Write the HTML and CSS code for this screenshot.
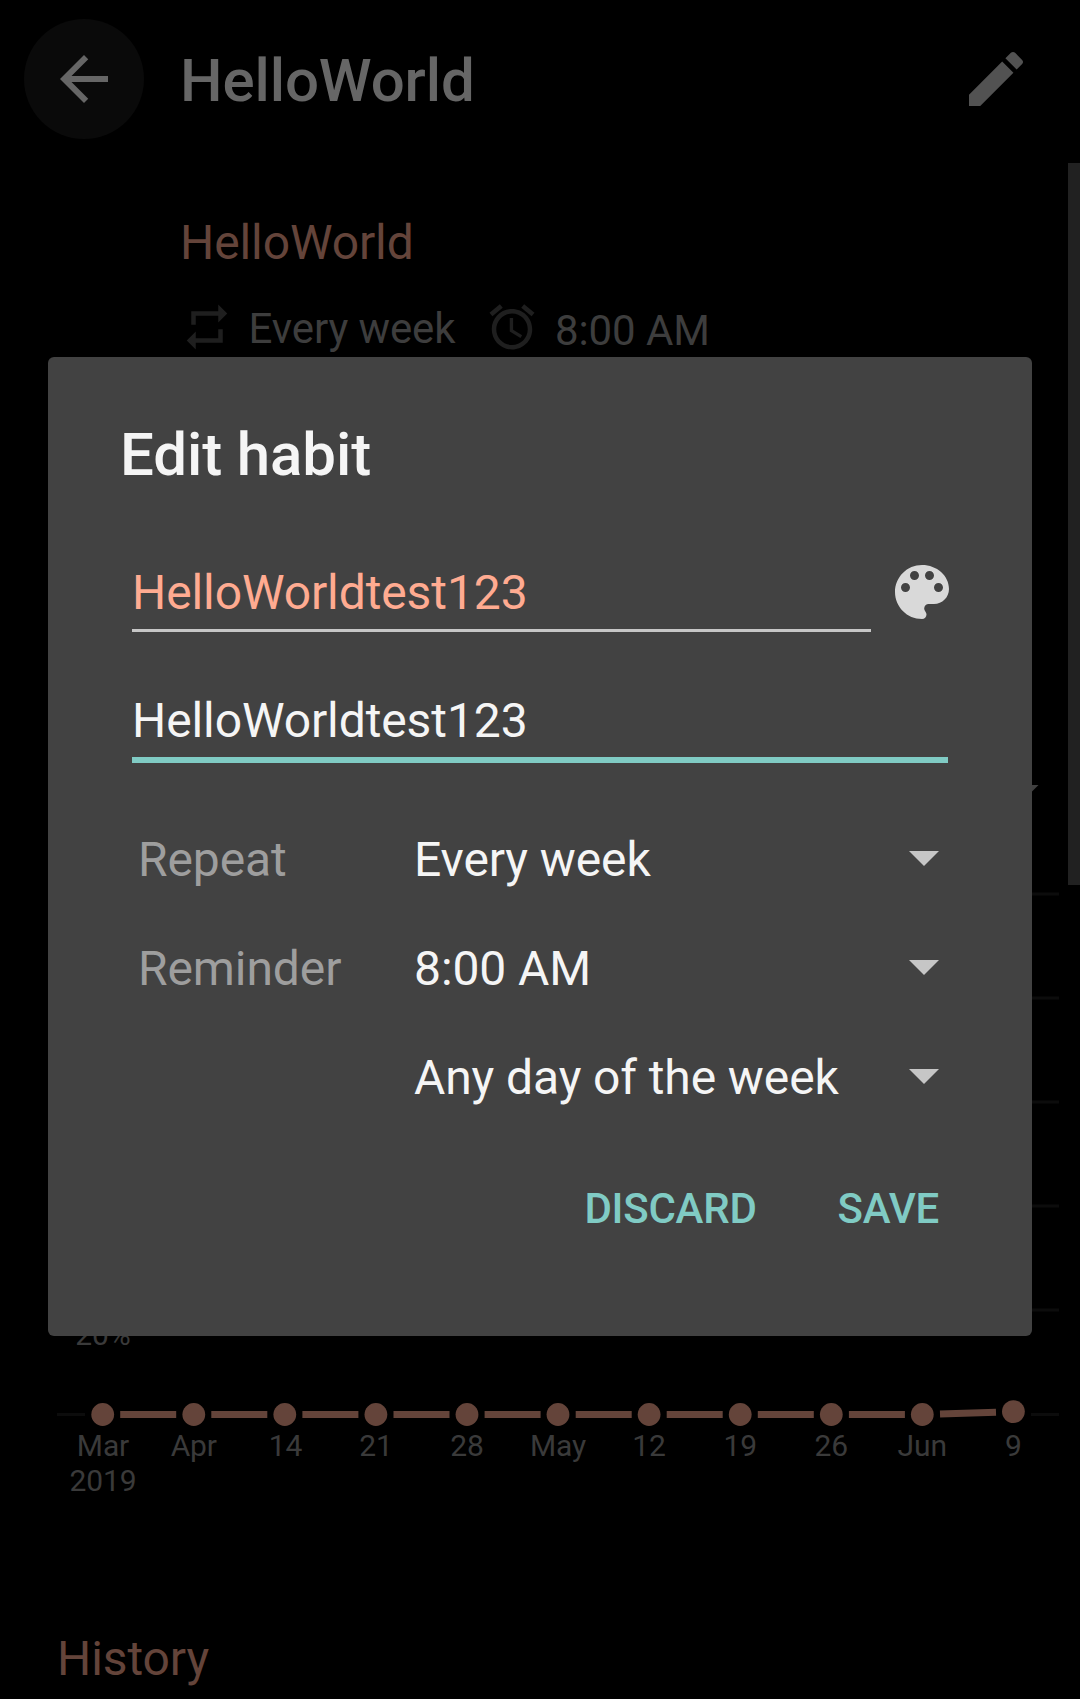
FILE: index.html
```html
<!DOCTYPE html>
<html lang="en">
<head>
<meta charset="utf-8">
<title>HelloWorld</title>
<link rel="stylesheet" href="styles.css">
</head>
<body>
<div class="screen">
  <header class="toolbar">
    <button class="back" aria-label="Back"><svg class="icon" viewBox="0 0 24 24"><path d="M20 11H7.83l5.59-5.59L12 4l-8 8 8 8 1.41-1.41L7.83 13H20v-2z"/></svg></button>
    <h1 class="toolbar-title">HelloWorld</h1>
    <button class="edit" aria-label="Edit"><svg class="icon" viewBox="0 0 24 24"><path d="M3 17.25V21h3.75L17.81 9.94l-3.75-3.75L3 17.25zM20.71 7.04c.39-.39.39-1.02 0-1.41l-2.34-2.34c-.39-.39-1.02-.39-1.41 0l-1.83 1.83 3.75 3.75 1.83-1.83z"/></svg></button>
  </header>

  <main class="content">
    <section class="summary">
      <h2 class="question">HelloWorld</h2>
      <div class="meta">
        <svg class="meta-icon" viewBox="0 0 24 24"><path d="M7 7h10v3l4-4-4-4v3H5v6h2V7zm10 10H7v-3l-4 4 4 4v-3h12v-6h-2v4z"/></svg>
        <span class="freq">Every week</span>
        <svg class="meta-icon alarm" viewBox="0 0 24 24"><path d="M22 5.72l-4.6-3.86-1.29 1.53 4.6 3.86L22 5.72zM7.88 3.39L6.6 1.86 2 5.71l1.29 1.53 4.59-3.85zM12.5 8H11v6l4.75 2.85.75-1.23-4-2.37V8zM12 4c-4.97 0-9 4.03-9 9s4.02 9 9 9c4.97 0 9-4.03 9-9s-4.03-9-9-9zm0 16c-3.87 0-7-3.13-7-7s3.13-7 7-7 7 3.13 7 7-3.13 7-7 7z"/></svg>
        <span class="time">8:00 AM</span>
      </div>
    </section>

    <svg class="chart" viewBox="0 0 1080 760" width="1080" height="760">
      <path class="spinner" d="M1008.500 45h30l-15 15z"/>
      <g class="grid">
        <path d="M57 154H1059M57 258H1059M57 362H1059M57 466H1059M57 570H1059M57 674.500H85M1031 674.500H1059"/>
      </g>
      <g class="series">
        <path d="M120.200 674.500h56M211.300 674.500h56M302.400 674.500h56M393.500 674.500h56M484.600 674.500h56M575.700 674.500h56M666.700 674.500h56M757.800 674.500h56M848.900 674.500h56M940 674l56-1.700"/>
        <circle cx="102.700" cy="674.500" r="11.400"/><circle cx="193.800" cy="674.500" r="11.400"/><circle cx="284.800" cy="674.500" r="11.400"/><circle cx="375.900" cy="674.500" r="11.400"/><circle cx="467" cy="674.500" r="11.400"/><circle cx="558" cy="674.500" r="11.400"/><circle cx="649.100" cy="674.500" r="11.400"/><circle cx="740.200" cy="674.500" r="11.400"/><circle cx="831.300" cy="674.500" r="11.400"/><circle cx="922.300" cy="674.500" r="11.400"/><circle cx="1013.400" cy="671.600" r="11.400"/>
      </g>
      <g class="labels">
        <text x="103" y="605">20%</text>
        <text x="103" y="716">Mar</text><text x="103" y="751">2019</text>
        <text x="193.800" y="716">Apr</text><text x="285.500" y="716">14</text><text x="375.900" y="716">21</text><text x="467" y="716">28</text><text x="558" y="716">May</text><text x="649.100" y="716">12</text><text x="740.200" y="716">19</text><text x="831.300" y="716">26</text><text x="922.300" y="716">Jun</text><text x="1013.400" y="716">9</text>
      </g>
    </svg>

    <h2 class="history">History</h2>
  </main>
  <div class="scrollbar"></div>

  <form class="dialog">
    <h2 class="dialog-title">Edit habit</h2>
    <div class="name-row">
      <div class="field name">HelloWorldtest123</div>
      <svg class="icon palette" viewBox="0 0 24 24"><path d="M12 3c-4.970 0-9 4.030-9 9s4.030 9 9 9c.830 0 1.500-.670 1.500-1.500 0-.390-.150-.740-.390-1.010-.230-.260-.380-.610-.380-.990 0-.830.670-1.500 1.500-1.500H16c2.760 0 5-2.240 5-5 0-4.420-4.030-8-9-8zm-5.500 9c-.830 0-1.500-.670-1.500-1.500S5.670 9 6.500 9 8 9.670 8 10.500 7.330 12 6.500 12zm3-4C8.670 8 8 7.330 8 6.500S8.670 5 9.500 5s1.500.670 1.500 1.500S10.330 8 9.500 8zm5 0c-.830 0-1.500-.670-1.500-1.500S13.670 5 14.500 5s1.500.670 1.500 1.500S15.330 8 14.500 8zm3 4c-.830 0-1.500-.670-1.500-1.500S16.670 9 17.500 9s1.500.670 1.500 1.500-.670 1.500-1.500 1.500z"/></svg>
    </div>
    <div class="field focused">HelloWorldtest123</div>
    <div class="options">
      <span class="label">Repeat</span><div class="select">Every week<i class="caret"></i></div>
      <span class="label">Reminder</span><div class="select">8:00 AM<i class="caret"></i></div>
      <span class="label"></span><div class="select">Any day of the week<i class="caret"></i></div>
    </div>
    <div class="actions">
      <button class="action" type="button">DISCARD</button>
      <button class="action" type="button">SAVE</button>
    </div>
  </form>
</div>
</body>
</html>
```
FILE: styles.css
```css
* { box-sizing: border-box; margin: 0; padding: 0; }
body { background: #000; font-family: Roboto, sans-serif; font-size: 48px; letter-spacing: -0.1px; }
button { background: none; border: 0; font: inherit; letter-spacing: inherit; }
h1, h2 { font-weight: 400; font-size: 48px; }
svg { display: block; flex: none; }

.screen { position: relative; width: 1080px; height: 1699px; overflow: hidden; }
.icon { width: 72px; height: 72px; }

.toolbar { display: flex; align-items: center; height: 163px; padding: 0 48px 5px 24px; }
.back { display: grid; place-items: center; width: 120px; height: 120px; border-radius: 50%; background: #0a0a0a; fill: #666; }
.toolbar-title { flex: 1; padding: 2px 0 0 36px; color: #666; font-size: 60px; font-weight: 500; }
.edit { fill: #525252; }

.summary { display: flex; flex-direction: column; height: 577px; padding: 52px 0 0 180px; }
.question { height: 56px; line-height: 56px; color: #64443a; }
.meta { display: flex; height: 60px; margin-top: 28px; color: #3d3d3d; font-size: 42px; line-height: 60px; }
.meta-icon { width: 54px; height: 54px; margin-top: 1px; fill: #1f1f1f; }
.freq { width: 249px; padding-left: 14.500px; }
.alarm { margin-left: 2px; }
.time { padding: 2px 0 0 16px; }

.spinner { fill: #404040; }
.grid path { stroke: #0c0c0c; stroke-width: 3; }
.series path { stroke: #64443a; stroke-width: 7; }
.series circle { fill: #64443a; }
.labels text { fill: #3a3a3a; font-size: 30px; text-anchor: middle; }
.history { padding: 131px 0 0 57px; line-height: 56px; color: #64443a; }

.scrollbar { position: absolute; top: 163px; right: 0; width: 12px; height: 722px; background: #212121; }

.dialog { position: absolute; top: 357px; left: 48px; display: flex; flex-direction: column; width: 984px; height: 979px; padding: 63px 84px 0 72px; border-radius: 6px; background: #424242; color: #f5f5f5; }
.dialog-title { height: 70px; font-size: 60px; font-weight: 500; line-height: 70px; }
.name-row { display: flex; justify-content: space-between; width: 826px; height: 86px; margin: 56px 0 0 12px; }
.field { height: 86px; border-bottom: 3px solid #c6c6c6; line-height: 94px; }
.name { width: 739px; color: #ffab91; }
.palette { margin-top: 10px; fill: #d9d9d9; }
.focused { height: 93px; margin: 38px 0 0 12px; border-bottom: 6px solid #80cbc4; line-height: 102px; }
.options { display: grid; grid-template-columns: 276px 1fr; grid-auto-rows: 109px; margin: 41px 9px 0 18px; line-height: 112px; }
.label { color: #9e9e9e; }
.select { display: flex; align-items: flex-start; justify-content: space-between; }
.caret { width: 30px; height: 15px; margin-top: 47px; background: #c6c6c6; clip-path: polygon(0 0, 100% 0, 50% 100%); }
.actions { display: flex; justify-content: flex-end; gap: 81px; margin: 37px 9px 0 0; }
.action { height: 80px; color: #80cbc4; font-size: 42px; font-weight: 500; letter-spacing: -0.250px; }
```
